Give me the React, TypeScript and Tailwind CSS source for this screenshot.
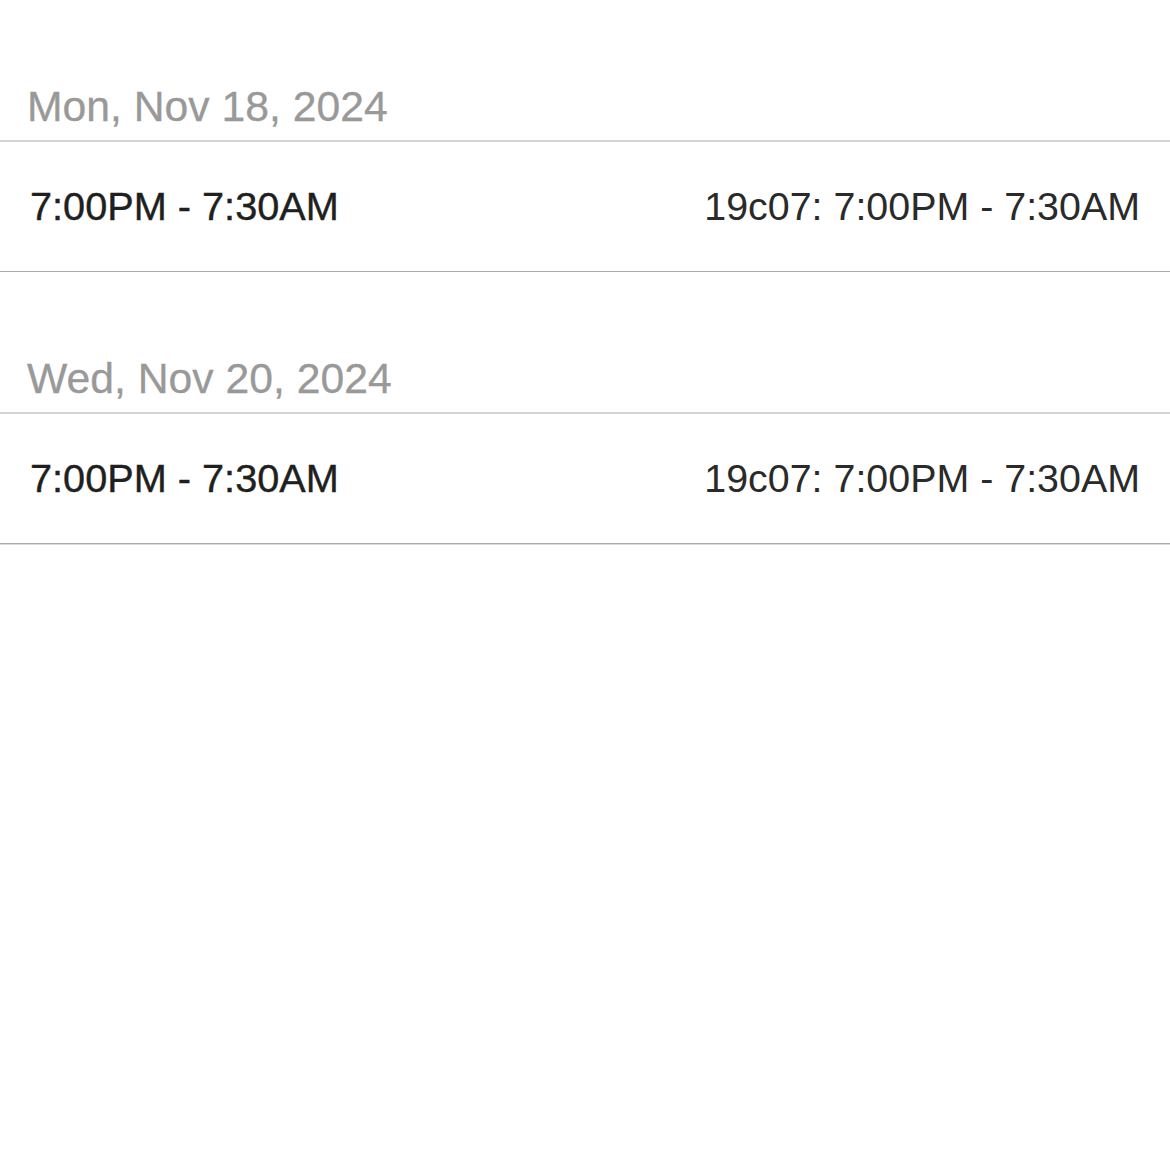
import React from "react";

interface Shift {
   date: string;
   time: string;
   detail: string;
}

const shifts: Shift[] = [
   { date: "Mon, Nov 18, 2024", time: "7:00PM - 7:30AM", detail: "19c07: 7:00PM - 7:30AM" },
   { date: "Wed, Nov 20, 2024", time: "7:00PM - 7:30AM", detail: "19c07: 7:00PM - 7:30AM" },
];

const App: React.FC = () => {
   return (
      <div
         className="w-[1170px] min-h-[1152px] bg-white"
         style={{ fontFamily: '"Liberation Sans", Arial, sans-serif' }}
      >
         {shifts.map((s, i) => (
            <div key={i}>
               {/* Date header */}
               <div className="h-[142px] flex items-end pl-[27px] pb-[12px] border-b-2 border-[#d4d4d4]">
                  <span className="text-[42.7px] leading-none text-[#999999] [-webkit-text-stroke:0.3px_#999999]">
                     {s.date}
                  </span>
               </div>
               {/* Shift row */}
               <div
                  className={`h-[130px] flex items-center justify-between pl-[30px] pr-[30px] border-b border-[#ababab] ${
                     i === shifts.length - 1 ? "shadow-[0_1px_0_#dcdcdc]" : ""
                  }`}
               >
                  <span className="text-[39.7px] leading-none text-[#1f1f1f] [-webkit-text-stroke:0.4px_#1f1f1f]">
                     {s.time}
                  </span>
                  <span className="text-[39.4px] leading-none text-[#2a2a2a]">{s.detail}</span>
               </div>
            </div>
         ))}
      </div>
   );
};

export default App;
